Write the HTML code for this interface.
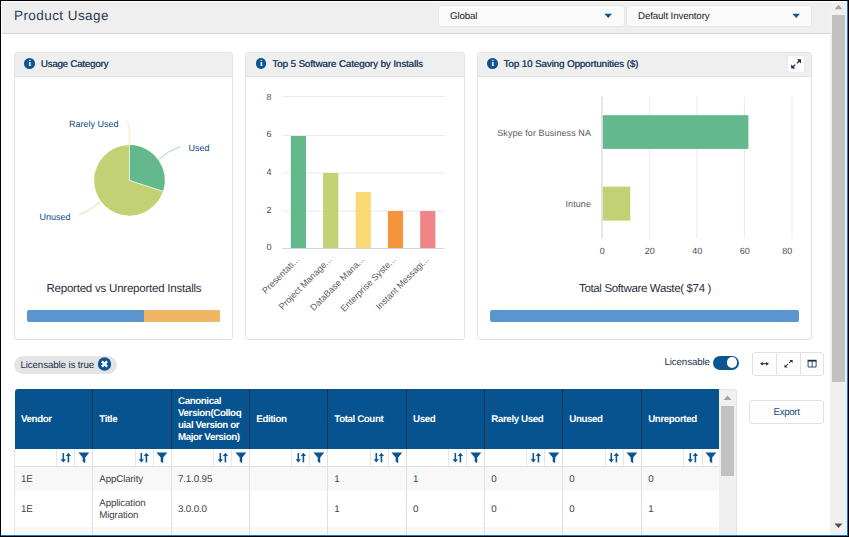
<!DOCTYPE html>
<html>
<head>
<meta charset="utf-8">
<title>Product Usage</title>
<style>
*{box-sizing:border-box;margin:0;padding:0}
html,body{width:849px;height:537px;overflow:hidden;background:#fff}
body{font-family:"Liberation Sans",sans-serif;font-size:10px;color:#333;position:relative;text-rendering:geometricPrecision}
.abs{position:absolute}
.t{position:absolute;white-space:nowrap;line-height:1}
/* window frame */
#frame-t{left:0;top:0;width:849px;height:1px;background:#000}
#frame-l{left:0;top:0;width:1px;height:537px;background:#000}
#frame-r1{left:847px;top:1px;width:1px;height:535px;background:#1a78d6}
#frame-r2{left:848px;top:0;width:1px;height:537px;background:#000}
#frame-b1{left:1px;top:535px;width:847px;height:1px;background:#1a78d6}
#frame-b2{left:0;top:536px;width:849px;height:1px;background:#000}
/* top header */
#hdr{left:2px;top:2px;width:828px;height:32px;background:#efefef;border-bottom:1px solid #d6d6d6}
.sel{position:absolute;top:5px;height:22px;background:#fafafa;border:1px solid #e6e6e6;border-radius:3px}
.caret{position:absolute;width:0;height:0;border-left:3.8px solid transparent;border-right:3.8px solid transparent;border-top:4.6px solid #0d5591}
/* page scrollbar */
#sb{left:830px;top:2px;width:17px;height:533px;background:#f0f0f0}
#sb-thumb{left:832px;top:15px;width:13px;height:367px;background:#c1c1c1}
/* cards */
.card{position:absolute;top:52px;height:288px;background:#fff;border:1px solid #e2e2e2;border-radius:3px}
.card-h{position:absolute;left:0;top:0;right:0;height:24px;background:#efefef;border-bottom:1px solid #e0e0e0;border-radius:2px 2px 0 0}
.ctitle{font-weight:normal;font-size:9.75px;color:#2a4466;text-shadow:0.3px 0 0 #2a4466;letter-spacing:-0.08px}
.info{position:absolute;width:10.7px;height:10.7px;border-radius:50%;background:#0d5591;color:#fff;font-family:"Liberation Serif",serif;font-weight:bold;font-size:9px;line-height:10.7px;text-align:center}
.lbl{color:#0f4c82;font-size:9px}
.ax{color:#5a5a5a;font-size:9px}
.big{font-size:11.5px;color:#2b3040}
.pbar{position:absolute;height:12px;border-radius:2px;overflow:hidden;background:#5b95d0}
/* table */
.th{position:absolute;top:389px;height:60px;background:#07538f;border-right:1px solid #1c3550}
.tht{color:#fff;font-weight:bold;font-size:9.75px;letter-spacing:-0.4px}
.td{color:#444;font-size:9.75px;letter-spacing:-0.13px}
.n10{font-size:9.75px;letter-spacing:-0.13px}
</style>
</head>
<body>

<!-- top header bar -->
<div id="hdr" class="abs"></div>
<div class="t" style="left:14px;top:9px;font-size:13.5px;letter-spacing:0.43px;color:#2b3a55">Product Usage</div>
<div class="sel" style="left:438px;width:187px"></div>
<div class="t n10" style="left:450px;top:12px;color:#222">Global</div>
<svg class="abs" style="left:604px;top:13px" width="9" height="6"><path d="M0.4 0.7 L8 0.7 L4.2 5.1 Z" fill="#0d5591"/></svg>
<div class="sel" style="left:626px;width:186px"></div>
<div class="t n10" style="left:638px;top:12px;color:#222">Default Inventory</div>
<svg class="abs" style="left:792px;top:13px" width="9" height="6"><path d="M0.4 0.7 L8 0.7 L4.2 5.1 Z" fill="#0d5591"/></svg>

<!-- page scrollbar -->
<div id="sb" class="abs"></div>
<div id="sb-thumb" class="abs"></div>
<svg class="abs" style="left:830px;top:1px" width="17" height="14"><path d="M4.6 8.2 L8.5 3.8 L12.4 8.2 Z" fill="#a3a3a3"/></svg>
<svg class="abs" style="left:830px;top:520px" width="17" height="14"><path d="M4.5 3.5 L12.5 3.5 L8.5 8 Z" fill="#505050"/></svg>

<!-- CARD 1 -->
<div class="card" style="left:14px;width:219px">
  <div class="card-h"></div>
</div>
<div class="info" style="left:24.3px;top:58.4px">i</div>
<div class="t ctitle" style="left:40.7px;top:60px;letter-spacing:-0.22px">Usage Category</div>

<svg class="abs" style="left:14px;top:76px" width="219" height="200" viewBox="14 76 219 200">
  <!-- pie: center 129.4,180.4 r 35 -->
  <circle cx="129.4" cy="180.4" r="35.3" fill="#c3d175"/>
  <path d="M129.4 180.4 L129.4 145.1 A35.3 35.3 0 0 1 162.97 191.3 Z" fill="#64b98c"/>
  <path d="M129.4 145.1 L129.4 180.4 L162.97 191.3" fill="none" stroke="#fff" stroke-width="0.8"/>
  <!-- leader lines -->
  <path d="M129.2 145 L129.2 128 Q129 122.5 125.5 122" fill="none" stroke="#fbe29a" stroke-width="0.8"/>
  <path d="M158.5 159.5 Q168 151 180 146.5" fill="none" stroke="#8fcbaa" stroke-width="0.8"/>
  <path d="M100.2 202 Q90 211 79 214.8" fill="none" stroke="#cfdb93" stroke-width="0.8"/>
</svg>
<div class="t lbl" style="left:69px;top:120px">Rarely Used</div>
<div class="t lbl" style="left:188.5px;top:144px">Used</div>
<div class="t lbl" style="left:39.5px;top:212.5px">Unused</div>
<div class="t big" style="left:46.5px;top:284px;letter-spacing:-0.22px">Reported vs Unreported Installs</div>
<div class="pbar" style="left:27px;top:310px;width:193px"><div class="abs" style="left:117px;top:0;width:76px;height:12px;background:#f0b666"></div></div>

<!-- CARD 2 -->
<div class="card" style="left:245px;width:220px">
  <div class="card-h"></div>
</div>
<div class="info" style="left:255.8px;top:58.4px">i</div>
<div class="t ctitle" style="left:272.3px;top:60px">Top 5 Software Category by Installs</div>
<svg class="abs" style="left:246px;top:77px" width="218" height="180" viewBox="246 77 218 180">
  <g stroke="#e9e9e9" stroke-width="1">
    <line x1="282.5" x2="444.5" y1="96.5" y2="96.5"/>
    <line x1="282.5" x2="444.5" y1="135.5" y2="135.5"/>
    <line x1="282.5" x2="444.5" y1="173" y2="173"/>
    <line x1="282.5" x2="444.5" y1="211" y2="211"/>
  </g>
  <rect x="290.8" y="136" width="15.2" height="112.5" fill="#64b98c"/>
  <rect x="323.1" y="173" width="15.2" height="75.5" fill="#c3d175"/>
  <rect x="355.6" y="192" width="15.2" height="56.5" fill="#fada73"/>
  <rect x="387.9" y="211" width="15.2" height="37.5" fill="#f5953b"/>
  <rect x="420.2" y="211" width="15.2" height="37.5" fill="#f08585"/>
  <line x1="282.5" x2="444.5" y1="248.5" y2="248.5" stroke="#ccd6eb" stroke-width="1"/>
</svg>
<div class="t ax" style="color:#4a4a4a;left:266.5px;top:92.6px">8</div>
<div class="t ax" style="color:#4a4a4a;left:266.5px;top:130.4px">6</div>
<div class="t ax" style="color:#4a4a4a;left:266.5px;top:167.6px">4</div>
<div class="t ax" style="color:#4a4a4a;left:266.5px;top:206.4px">2</div>
<div class="t ax" style="color:#4a4a4a;left:266.5px;top:243.1px">0</div>
<div class="t ax xl" style="right:551px;top:254px;transform-origin:100% 50%;transform:rotate(-45deg)">Presentati...</div>
<div class="t ax xl" style="right:518.7px;top:254px;transform-origin:100% 50%;transform:rotate(-45deg)">Project Manage...</div>
<div class="t ax xl" style="right:486.3px;top:254px;transform-origin:100% 50%;transform:rotate(-45deg)">DataBase Mana...</div>
<div class="t ax xl" style="right:454px;top:254px;transform-origin:100% 50%;transform:rotate(-45deg)">Enterprise Syste...</div>
<div class="t ax xl" style="right:421.6px;top:254px;transform-origin:100% 50%;transform:rotate(-45deg)">Instant Messagi...</div>

<!-- CARD 3 -->
<div class="card" style="left:477px;width:335px">
  <div class="card-h"></div>
</div>
<div class="info" style="left:487.3px;top:58.4px">i</div>
<div class="t ctitle" style="left:503.5px;top:60px">Top 10 Saving Opportunities ($)</div>
<div class="abs" style="left:787px;top:55px;width:18px;height:18px;background:#fff;border:1px solid #ebebeb;border-radius:3px"></div>
<svg class="abs" style="left:787px;top:55px" width="18" height="18" viewBox="0 0 18 18"><g fill="#1a2a5c" stroke="#1a2a5c"><path d="M12.6 5.7 L9.9 8.4 M8.3 9.6 L5.6 12.2" stroke-width="1.3"/><path d="M14 4.3 L9.8 4.3 L14 8.5 Z" stroke="none"/><path d="M4.2 13.6 L4.2 9.4 L8.4 13.6 Z" stroke="none"/></g></svg>
<svg class="abs" style="left:478px;top:77px" width="333" height="180" viewBox="478 77 333 180">
  <g stroke="#ebebeb" stroke-width="1">
    <line x1="649.4" x2="649.4" y1="96.5" y2="238.5"/>
    <line x1="696.8" x2="696.8" y1="96.5" y2="238.5"/>
    <line x1="744.4" x2="744.4" y1="96.5" y2="238.5"/>
    <line x1="792" x2="792" y1="96.5" y2="238.5"/>
  </g>
  <line x1="602" x2="602" y1="96.5" y2="238.5" stroke="#d9e0ee" stroke-width="1.6"/>
  <rect x="602.8" y="115.2" width="145.6" height="33.7" fill="#64b98c"/>
  <rect x="602.8" y="186.6" width="27.5" height="34" fill="#c3d175"/>
</svg>
<div class="t ax" style="right:258px;top:129px;letter-spacing:0.08px">Skype for Business NA</div>
<div class="t ax" style="right:258px;top:200px;letter-spacing:0.08px">Intune</div>
<div class="t ax" style="color:#4a4a4a;left:599.7px;top:246.6px">0</div>
<div class="t ax" style="color:#4a4a4a;left:644.7px;top:246.6px">20</div>
<div class="t ax" style="color:#4a4a4a;left:692.2px;top:246.6px">40</div>
<div class="t ax" style="color:#4a4a4a;left:739.7px;top:246.6px">60</div>
<div class="t ax" style="color:#4a4a4a;left:782.3px;top:246.6px">80</div>
<div class="t big" style="left:579px;top:284px;letter-spacing:-0.35px">Total Software Waste( $74 )</div>
<div class="pbar" style="left:490px;top:310px;width:309px"></div>

<!-- filter chip row -->
<div class="abs" style="left:14px;top:356px;width:103px;height:18px;border-radius:9px;background:#e4e4e4"></div>
<div class="t n10" style="left:20.5px;top:360.5px;color:#22304d">Licensable is true</div>
<svg class="abs" style="left:97px;top:357px" width="15" height="15" viewBox="0 0 15 15"><circle cx="7.5" cy="7" r="6.7" fill="#0d5591"/><path d="M4.9 4.4 L10.1 9.6 M10.1 4.4 L4.9 9.6" stroke="#fff" stroke-width="2.3" stroke-linecap="butt"/></svg>

<div class="t n10" style="left:664.5px;top:358px;color:#22304d">Licensable</div>
<div class="abs" style="left:713px;top:355.5px;width:26px;height:14px;border-radius:7px;background:#0d5591"></div>
<div class="abs" style="left:727px;top:357.3px;width:10.4px;height:10.4px;border-radius:50%;background:#fff"></div>

<div class="abs" style="left:752px;top:352px;width:72px;height:24px;background:#fdfdfd;border:1px solid #e2e2e2;border-radius:3px"></div>
<div class="abs" style="left:776px;top:353px;width:1px;height:22px;background:#e2e2e2"></div>
<div class="abs" style="left:800px;top:353px;width:1px;height:22px;background:#e2e2e2"></div>
<svg class="abs" style="left:752px;top:352px" width="72" height="24" viewBox="0 0 72 24">
  <g fill="#1d2a45" stroke="#1d2a45">
    <path d="M9.8 11.7 L15.2 11.7" stroke-width="1.1"/><path d="M8 11.7 L10.8 10 L10.8 13.4 Z" stroke="none"/><path d="M17 11.7 L14.2 10 L14.2 13.4 Z" stroke="none"/>
    <path d="M34 14 L36 12 M37.2 10.9 L39.2 8.9" stroke-width="1.05"/><path d="M37.6 8 L40.6 8 L40.6 11 Z" stroke="none"/><path d="M32.5 12.5 L32.5 15.5 L35.5 15.5 Z" stroke="none"/>
    <rect x="55.6" y="7.8" width="9" height="1.8" stroke="none"/>
    <path d="M56.1 9 L56.1 15 L64.1 15 L64.1 9 M60.1 9 L60.1 15" fill="none" stroke-width="1" stroke="#3a4a68"/>
  </g>
</svg>

<div class="abs" style="left:749px;top:400px;width:75px;height:24px;background:#fdfdfd;border:1px solid #e2e2e2;border-radius:3px"></div>
<div class="t n10" style="left:773.5px;top:407.5px;color:#1b4f80;letter-spacing:-0.35px">Export</div>

<!-- TABLE -->
<div id="tbl">
<div class="abs" style="left:15px;top:389px;width:704px;height:60px;background:#07538f;border-radius:3px 0 0 0"></div>
<div class="abs" style="left:15px;top:449px;width:704px;height:18px;background:#fff;border-bottom:1px solid #e0e0e0"></div>
<div class="abs" style="left:15px;top:467px;width:704px;height:24px;background:#f8f8f8"></div>
<div class="abs" style="left:15px;top:491px;width:704px;height:36px;background:#fff"></div>
<div class="abs" style="left:15px;top:527px;width:704px;height:8px;background:#f8f8f8"></div>
<div class="abs" style="left:14px;top:449px;width:1px;height:86px;background:#e4e4e4"></div>
<div class="abs" style="left:92px;top:389px;width:1px;height:60px;background:#1c3550"></div>
<div class="abs" style="left:92px;top:449px;width:1px;height:86px;background:#e0e0e0"></div>
<div class="t tht" style="left:21.0px;top:413.5px;line-height:12px">Vendor</div>
<div class="abs" style="left:56px;top:449px;width:1px;height:18px;background:#e6e6e6"></div>
<div class="abs" style="left:74px;top:449px;width:1px;height:18px;background:#e6e6e6"></div>
<svg class="abs" style="left:56.5px;top:449px" width="36" height="18" viewBox="0 0 36 18"><g fill="#0d5591" stroke="#0d5591"><path d="M6.3 4 L6.3 12" stroke-width="1.6"/><path d="M3.6 10.2 L9 10.2 L6.3 13.4 Z" stroke="none"/><path d="M11.4 6 L11.4 13.4" stroke-width="1.6"/><path d="M8.7 7 L14.1 7 L11.4 3.8 Z" stroke="none"/><path d="M21.4 3.5 L32.3 3.5 L28.2 8.4 L28.2 14.2 L25.7 12.4 L25.7 8.4 Z" stroke="none"/></g></svg>
<div class="t td" style="left:21.0px;top:474.5px">1E</div>
<div class="t td" style="left:21.0px;top:503.5px;line-height:12px">1E</div>
<div class="abs" style="left:171px;top:389px;width:1px;height:60px;background:#1c3550"></div>
<div class="abs" style="left:171px;top:449px;width:1px;height:86px;background:#e0e0e0"></div>
<div class="t tht" style="left:99.3px;top:413.5px;line-height:12px">Title</div>
<div class="abs" style="left:135px;top:449px;width:1px;height:18px;background:#e6e6e6"></div>
<div class="abs" style="left:153px;top:449px;width:1px;height:18px;background:#e6e6e6"></div>
<svg class="abs" style="left:135.2px;top:449px" width="36" height="18" viewBox="0 0 36 18"><g fill="#0d5591" stroke="#0d5591"><path d="M6.3 4 L6.3 12" stroke-width="1.6"/><path d="M3.6 10.2 L9 10.2 L6.3 13.4 Z" stroke="none"/><path d="M11.4 6 L11.4 13.4" stroke-width="1.6"/><path d="M8.7 7 L14.1 7 L11.4 3.8 Z" stroke="none"/><path d="M21.4 3.5 L32.3 3.5 L28.2 8.4 L28.2 14.2 L25.7 12.4 L25.7 8.4 Z" stroke="none"/></g></svg>
<div class="t td" style="left:99.3px;top:474.5px">AppClarity</div>
<div class="t td" style="left:99.3px;top:497.5px;line-height:12px">Application<br>Migration</div>
<div class="abs" style="left:249px;top:389px;width:1px;height:60px;background:#1c3550"></div>
<div class="abs" style="left:249px;top:449px;width:1px;height:86px;background:#e0e0e0"></div>
<div class="t tht" style="left:178.0px;top:395.5px;line-height:12px">Canonical<br>Version(Colloq<br>uial Version or<br>Major Version)</div>
<div class="abs" style="left:213px;top:449px;width:1px;height:18px;background:#e6e6e6"></div>
<div class="abs" style="left:231px;top:449px;width:1px;height:18px;background:#e6e6e6"></div>
<svg class="abs" style="left:213.5px;top:449px" width="36" height="18" viewBox="0 0 36 18"><g fill="#0d5591" stroke="#0d5591"><path d="M6.3 4 L6.3 12" stroke-width="1.6"/><path d="M3.6 10.2 L9 10.2 L6.3 13.4 Z" stroke="none"/><path d="M11.4 6 L11.4 13.4" stroke-width="1.6"/><path d="M8.7 7 L14.1 7 L11.4 3.8 Z" stroke="none"/><path d="M21.4 3.5 L32.3 3.5 L28.2 8.4 L28.2 14.2 L25.7 12.4 L25.7 8.4 Z" stroke="none"/></g></svg>
<div class="t td" style="left:178.0px;top:474.5px">7.1.0.95</div>
<div class="t td" style="left:178.0px;top:503.5px;line-height:12px">3.0.0.0</div>
<div class="abs" style="left:327px;top:389px;width:1px;height:60px;background:#1c3550"></div>
<div class="abs" style="left:327px;top:449px;width:1px;height:86px;background:#e0e0e0"></div>
<div class="t tht" style="left:256.3px;top:413.5px;line-height:12px">Edition</div>
<div class="abs" style="left:291px;top:449px;width:1px;height:18px;background:#e6e6e6"></div>
<div class="abs" style="left:309px;top:449px;width:1px;height:18px;background:#e6e6e6"></div>
<svg class="abs" style="left:291.5px;top:449px" width="36" height="18" viewBox="0 0 36 18"><g fill="#0d5591" stroke="#0d5591"><path d="M6.3 4 L6.3 12" stroke-width="1.6"/><path d="M3.6 10.2 L9 10.2 L6.3 13.4 Z" stroke="none"/><path d="M11.4 6 L11.4 13.4" stroke-width="1.6"/><path d="M8.7 7 L14.1 7 L11.4 3.8 Z" stroke="none"/><path d="M21.4 3.5 L32.3 3.5 L28.2 8.4 L28.2 14.2 L25.7 12.4 L25.7 8.4 Z" stroke="none"/></g></svg>
<div class="abs" style="left:406px;top:389px;width:1px;height:60px;background:#1c3550"></div>
<div class="abs" style="left:406px;top:449px;width:1px;height:86px;background:#e0e0e0"></div>
<div class="t tht" style="left:334.3px;top:413.5px;line-height:12px">Total Count</div>
<div class="abs" style="left:370px;top:449px;width:1px;height:18px;background:#e6e6e6"></div>
<div class="abs" style="left:388px;top:449px;width:1px;height:18px;background:#e6e6e6"></div>
<svg class="abs" style="left:370.2px;top:449px" width="36" height="18" viewBox="0 0 36 18"><g fill="#0d5591" stroke="#0d5591"><path d="M6.3 4 L6.3 12" stroke-width="1.6"/><path d="M3.6 10.2 L9 10.2 L6.3 13.4 Z" stroke="none"/><path d="M11.4 6 L11.4 13.4" stroke-width="1.6"/><path d="M8.7 7 L14.1 7 L11.4 3.8 Z" stroke="none"/><path d="M21.4 3.5 L32.3 3.5 L28.2 8.4 L28.2 14.2 L25.7 12.4 L25.7 8.4 Z" stroke="none"/></g></svg>
<div class="t td" style="left:334.3px;top:474.5px">1</div>
<div class="t td" style="left:334.3px;top:503.5px;line-height:12px">1</div>
<div class="abs" style="left:484px;top:389px;width:1px;height:60px;background:#1c3550"></div>
<div class="abs" style="left:484px;top:449px;width:1px;height:86px;background:#e0e0e0"></div>
<div class="t tht" style="left:413.0px;top:413.5px;line-height:12px">Used</div>
<div class="abs" style="left:448px;top:449px;width:1px;height:18px;background:#e6e6e6"></div>
<div class="abs" style="left:466px;top:449px;width:1px;height:18px;background:#e6e6e6"></div>
<svg class="abs" style="left:448.5px;top:449px" width="36" height="18" viewBox="0 0 36 18"><g fill="#0d5591" stroke="#0d5591"><path d="M6.3 4 L6.3 12" stroke-width="1.6"/><path d="M3.6 10.2 L9 10.2 L6.3 13.4 Z" stroke="none"/><path d="M11.4 6 L11.4 13.4" stroke-width="1.6"/><path d="M8.7 7 L14.1 7 L11.4 3.8 Z" stroke="none"/><path d="M21.4 3.5 L32.3 3.5 L28.2 8.4 L28.2 14.2 L25.7 12.4 L25.7 8.4 Z" stroke="none"/></g></svg>
<div class="t td" style="left:413.0px;top:474.5px">1</div>
<div class="t td" style="left:413.0px;top:503.5px;line-height:12px">0</div>
<div class="abs" style="left:562px;top:389px;width:1px;height:60px;background:#1c3550"></div>
<div class="abs" style="left:562px;top:449px;width:1px;height:86px;background:#e0e0e0"></div>
<div class="t tht" style="left:491.3px;top:413.5px;line-height:12px">Rarely Used</div>
<div class="abs" style="left:526px;top:449px;width:1px;height:18px;background:#e6e6e6"></div>
<div class="abs" style="left:544px;top:449px;width:1px;height:18px;background:#e6e6e6"></div>
<svg class="abs" style="left:526.5px;top:449px" width="36" height="18" viewBox="0 0 36 18"><g fill="#0d5591" stroke="#0d5591"><path d="M6.3 4 L6.3 12" stroke-width="1.6"/><path d="M3.6 10.2 L9 10.2 L6.3 13.4 Z" stroke="none"/><path d="M11.4 6 L11.4 13.4" stroke-width="1.6"/><path d="M8.7 7 L14.1 7 L11.4 3.8 Z" stroke="none"/><path d="M21.4 3.5 L32.3 3.5 L28.2 8.4 L28.2 14.2 L25.7 12.4 L25.7 8.4 Z" stroke="none"/></g></svg>
<div class="t td" style="left:491.3px;top:474.5px">0</div>
<div class="t td" style="left:491.3px;top:503.5px;line-height:12px">0</div>
<div class="abs" style="left:641px;top:389px;width:1px;height:60px;background:#1c3550"></div>
<div class="abs" style="left:641px;top:449px;width:1px;height:86px;background:#e0e0e0"></div>
<div class="t tht" style="left:569.3px;top:413.5px;line-height:12px">Unused</div>
<div class="abs" style="left:605px;top:449px;width:1px;height:18px;background:#e6e6e6"></div>
<div class="abs" style="left:623px;top:449px;width:1px;height:18px;background:#e6e6e6"></div>
<svg class="abs" style="left:605.4px;top:449px" width="36" height="18" viewBox="0 0 36 18"><g fill="#0d5591" stroke="#0d5591"><path d="M6.3 4 L6.3 12" stroke-width="1.6"/><path d="M3.6 10.2 L9 10.2 L6.3 13.4 Z" stroke="none"/><path d="M11.4 6 L11.4 13.4" stroke-width="1.6"/><path d="M8.7 7 L14.1 7 L11.4 3.8 Z" stroke="none"/><path d="M21.4 3.5 L32.3 3.5 L28.2 8.4 L28.2 14.2 L25.7 12.4 L25.7 8.4 Z" stroke="none"/></g></svg>
<div class="t td" style="left:569.3px;top:474.5px">0</div>
<div class="t td" style="left:569.3px;top:503.5px;line-height:12px">0</div>
<div class="t tht" style="left:648.2px;top:413.5px;line-height:12px">Unreported</div>
<div class="abs" style="left:683px;top:449px;width:1px;height:18px;background:#e6e6e6"></div>
<div class="abs" style="left:702px;top:449px;width:1px;height:18px;background:#e6e6e6"></div>
<svg class="abs" style="left:683.8px;top:449px" width="36" height="18" viewBox="0 0 36 18"><g fill="#0d5591" stroke="#0d5591"><path d="M6.3 4 L6.3 12" stroke-width="1.6"/><path d="M3.6 10.2 L9 10.2 L6.3 13.4 Z" stroke="none"/><path d="M11.4 6 L11.4 13.4" stroke-width="1.6"/><path d="M8.7 7 L14.1 7 L11.4 3.8 Z" stroke="none"/><path d="M21.4 3.5 L32.3 3.5 L28.2 8.4 L28.2 14.2 L25.7 12.4 L25.7 8.4 Z" stroke="none"/></g></svg>
<div class="t td" style="left:648.2px;top:474.5px">0</div>
<div class="t td" style="left:648.2px;top:503.5px;line-height:12px">1</div>
<div class="abs" style="left:719px;top:389px;width:17.5px;height:146px;background:#f0f0f0;border-right:1px solid #e2e2e2;border-top:1px solid #e8e8e8;border-radius:0 3px 0 0"></div>
<div class="abs" style="left:721px;top:406px;width:13px;height:70px;background:#c1c1c1"></div>
<svg class="abs" style="left:718.6px;top:390px" width="17" height="14"><path d="M4.5 10 L8.5 5.5 L12.5 10 Z" fill="#a3a3a3"/></svg>
</div>

<!-- window frame -->
<div id="frame-t" class="abs"></div>
<div id="frame-l" class="abs"></div>
<div id="frame-r1" class="abs"></div>
<div id="frame-r2" class="abs"></div>
<div id="frame-b1" class="abs"></div>
<div id="frame-b2" class="abs"></div>
</body>
</html>
